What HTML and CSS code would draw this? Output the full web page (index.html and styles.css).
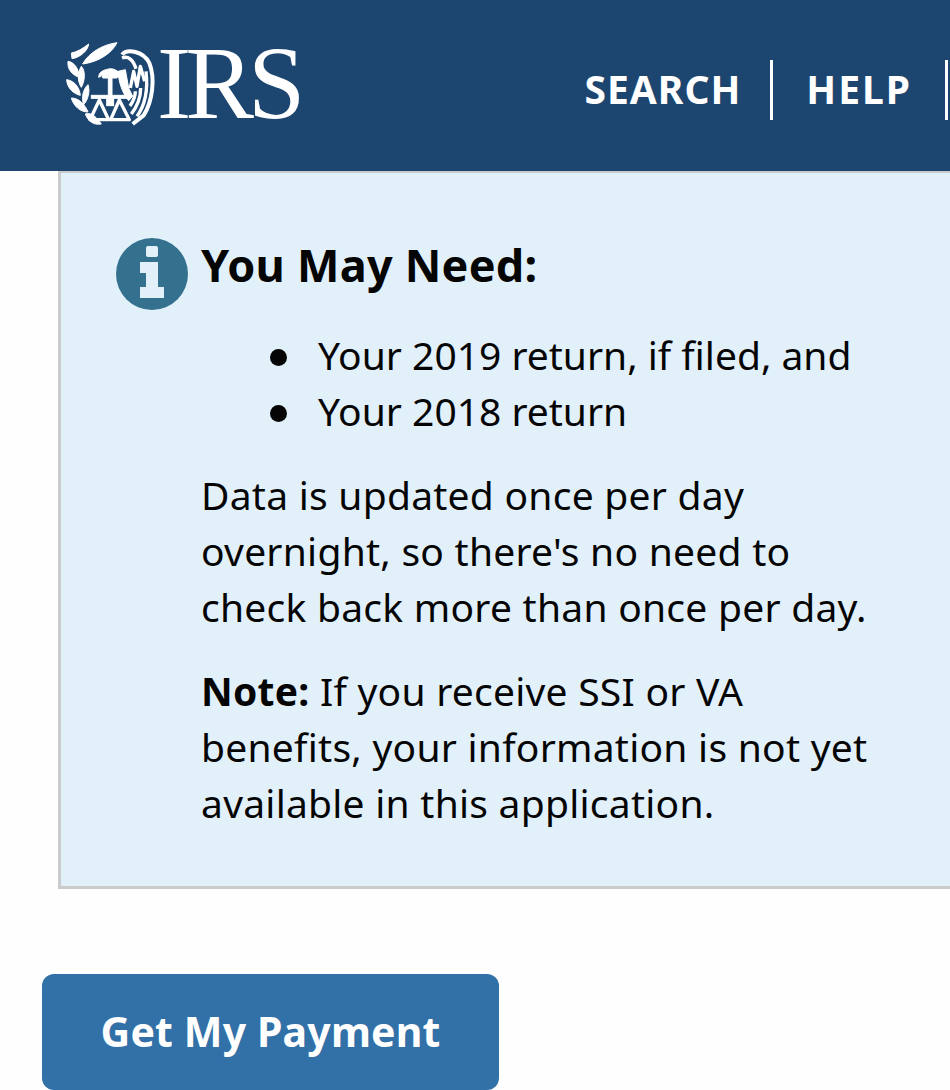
FILE: index.html
```html
<!DOCTYPE html>
<html>
<head>
    <title>Get My Payment</title>
    <link rel="stylesheet" href="styles.css">
</head>
<body>
    <div class="header">
        <a href="#" class="logo">
            <svg class="seal" viewBox="0 0 300 276" width="100" height="92">
                <g fill="#fff" stroke="#fff" stroke-width="3">
                    <!-- laurel -->
                    <path d="M62 78 C80 45 120 20 165 14 C150 45 110 72 62 78 Z"/>
                    <path d="M28 45 C45 42 62 32 80 18 C78 38 55 58 30 62 Z"/>
                    <path d="M18 70 C35 72 50 90 52 118 C32 112 15 95 18 70 Z"/>
                    <path d="M58 85 C72 100 68 130 58 148 C46 130 46 105 58 85 Z"/>
                    <path d="M14 125 C35 128 52 145 55 172 C35 168 15 150 14 125 Z"/>
                    <path d="M78 140 C85 160 78 185 65 200 C58 180 62 155 78 140 Z"/>
                    <path d="M28 180 C50 180 68 198 78 222 C55 222 35 205 28 180 Z"/>
                    <path d="M70 228 C90 222 105 240 118 258 C95 262 78 250 70 228 Z"/>
                    <!-- head and scales -->
                    <path d="M110 118 C110 102 124 96 140 93 C155 90 168 98 176 110 L164 120 L122 120 L122 112 Z"/>
                    <rect x="139" y="118" width="11" height="60"/>
                    <rect x="88" y="172" width="108" height="9"/>
                    <rect x="134" y="181" width="21" height="22"/>
                    <!-- body -->
                    <path d="M168 100 L190 95 L200 150 L212 175 L200 188 C180 165 170 130 168 100 Z"/>
                </g>
                <g fill="none" stroke="#fff" stroke-width="10" stroke-linejoin="round">
                    <path d="M112 186 L84 245 L140 245 Z"/>
                    <path d="M172 186 L146 245 L202 245 Z"/>
                    <!-- wing -->
                    <path stroke-width="12" d="M180 50 C195 30 245 40 262 75 C280 120 272 190 245 232 L212 258"/>
                    <path d="M180 60 C198 52 214 66 222 92"/>
                    <path d="M205 150 L215 100 L225 145 L235 85 L248 130"/>
                    <path d="M252 100 C258 150 250 200 225 235"/>
                    <path d="M236 150 C236 180 226 205 208 228"/>
                    <path d="M220 160 C220 176 214 190 204 204"/>
                </g>
            </svg>
            <span class="logo-text">IRS</span>
        </a>
        <div class="nav">
            <a href="#" class="nav-link nav-search">SEARCH</a>
            <a href="#" class="nav-link nav-help">HELP</a>
        </div>
    </div>

    <div class="callout">
        <div class="info-icon">
            <svg viewBox="0 0 72 72" width="72" height="72">
                <circle cx="36" cy="36" r="36" fill="#34718f"/>
                <rect x="30" y="8" width="12" height="11" rx="2" fill="#e2f0fa"/>
                <path d="M24 24 H42 V49 H48 V60 H24 V49 H30 V35 H24 Z" fill="#e2f0fa"/>
            </svg>
        </div>
        <div class="callout-body">
            <h2 class="callout-title">You May Need:</h2>
            <ul class="need-list">
                <li>Your 2019 return, if filed, and</li>
                <li>Your 2018 return</li>
            </ul>
            <p class="callout-text">Data is updated once per day<br>overnight, so there's no need to<br>check back more than once per day.</p>
            <p class="callout-text"><strong>Note:</strong> If you receive SSI or VA<br>benefits, your information is not yet<br>available in this application.</p>
        </div>
    </div>

    <a href="#" class="payment-btn">Get My Payment</a>
</body>
</html>
```

FILE: styles.css
```css
html, body {
    height: 1090px;
    overflow: hidden;
}
body {
    font-family: "Noto Sans", Arial, sans-serif;
    margin: 0;
    background-color: #fefefe;
    color: #050505;
}
.header {
    display: flex;
    justify-content: space-between;
    align-items: flex-start;
    height: 171px;
    background: #1c4670;
    padding-left: 62px;
}
.logo {
    display: flex;
    align-items: flex-start;
    color: white;
    text-decoration: none;
    padding-top: 38px;
}
.seal {
    flex: none;
}
.logo-text {
    font-family: "Liberation Serif", serif;
    font-size: 103px;
    line-height: 90px;
    letter-spacing: -6px;
    margin-left: -5px;
}
.nav {
    display: flex;
    margin-top: 60px;
    margin-right: 2px;
}
.nav-link {
    display: flex;
    align-items: center;
    box-sizing: border-box;
    height: 60px;
    padding-bottom: 4px;
    border-right: 3px solid white;
    color: white;
    font-size: 39px;
    font-weight: 700;
    text-decoration: none;
}
.nav-search {
    padding-left: 33px;
    padding-right: 29px;
    letter-spacing: 1px;
}
.nav-help {
    padding-left: 33px;
    padding-right: 33px;
    letter-spacing: 2px;
}
.callout {
    display: flex;
    width: 1000px;
    height: 718px;
    margin-left: 58px;
    box-sizing: border-box;
    padding: 64px 0 0 55px;
    background: #e2f0fa;
    border: 3px solid #cacbcc;
    border-top-width: 2px;
}
.info-icon {
    flex: none;
    width: 72px;
    height: 72px;
    margin: 1px 13px 0 0;
}
.callout-title {
    margin: 0;
    font-size: 45px;
    line-height: 56px;
    letter-spacing: 0.25px;
    font-weight: 700;
}
.need-list {
    margin: 34px 0 0 0;
    padding-left: 69px;
    list-style: none;
}
.need-list li {
    display: flex;
    align-items: center;
    font-size: 39px;
    line-height: 56px;
}
.need-list li::before {
    content: "";
    flex: none;
    width: 17px;
    height: 17px;
    margin: 5px 31px 0 0;
    border-radius: 50%;
    background: #050505;
}
.callout-text {
    margin: 28px 0 0 0;
    font-size: 39px;
    line-height: 56px;
    letter-spacing: 0.25px;
}
.payment-btn {
    display: block;
    width: 457px;
    height: 116px;
    margin: 85px 0 0 42px;
    box-sizing: border-box;
    padding-top: 28px;
    background: #3270a8;
    border-radius: 12px;
    color: white;
    font-size: 41px;
    line-height: 58px;
    letter-spacing: 0.15px;
    font-weight: 700;
    text-align: center;
    text-decoration: none;
}
```
